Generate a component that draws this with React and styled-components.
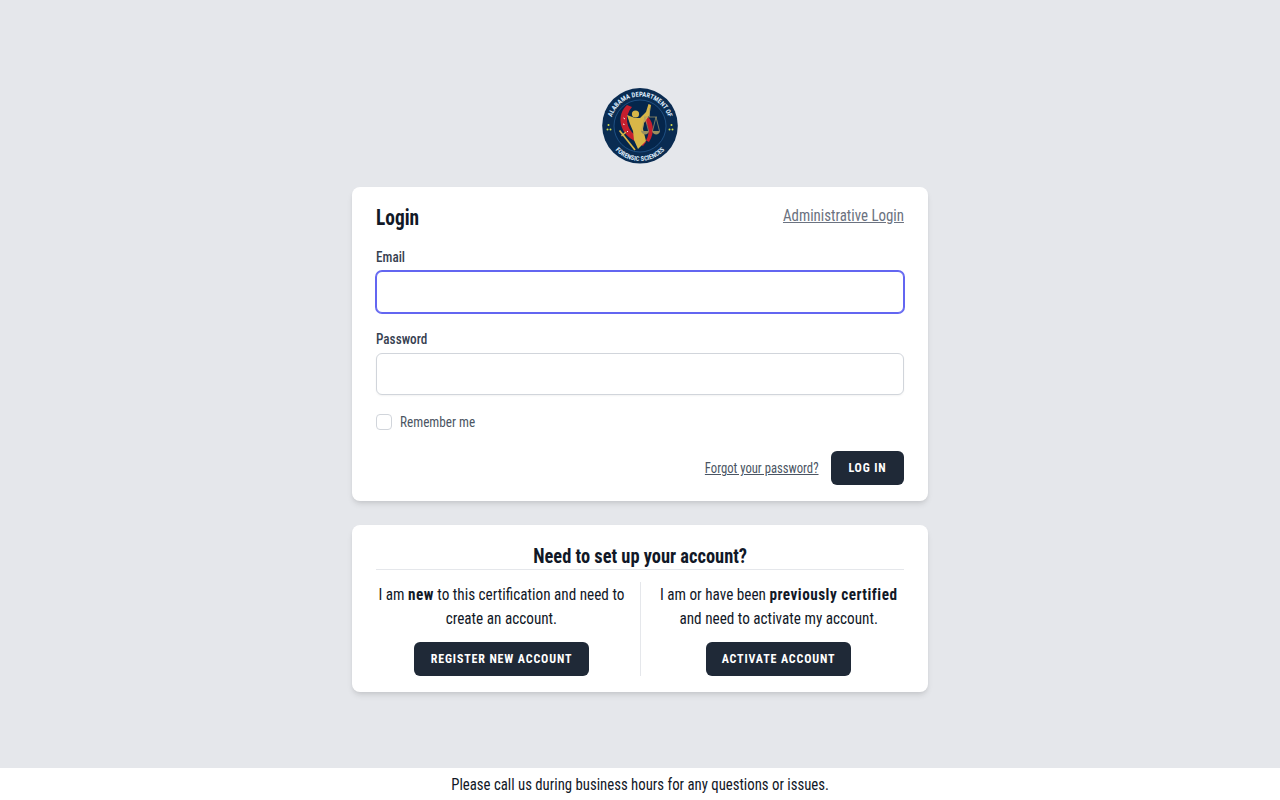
import React from "react";
import styled, { createGlobalStyle, css } from "styled-components";

const fontStack = `"Roboto Condensed", "Liberation Sans", sans-serif`;

// the condensed face is still wider than the design's, so squeeze the text runs
const squeeze = (x, origin = "left") => css`
  display: inline-block;
  white-space: nowrap;
  transform: scaleX(${x});
  transform-origin: ${origin} center;
`;

const GlobalStyle = createGlobalStyle`
  * { box-sizing: border-box; }
  body {
    margin: 0;
    background: #e5e7eb;
    font-family: ${fontStack};
    color: #111827;
  }
`;

const Page = styled.div`
  min-height: 800px;
  display: flex;
  flex-direction: column;
  align-items: center;
  padding-top: 88px;
`;

const LogoWrap = styled.div`
  width: 76px;
  height: 76px;
  margin-bottom: 23px;
`;

const Card = styled.section`
  width: 576px;
  background: #fff;
  border-radius: 8px;
  box-shadow: 0 4px 6px -1px rgba(0, 0, 0, 0.1), 0 2px 4px -1px rgba(0, 0, 0, 0.06);
  padding: 16px 24px;
  margin-bottom: 24px;
`;

const CardHead = styled.div`
  display: flex;
  justify-content: space-between;
  align-items: flex-start;
  height: 44px;
`;

const Title = styled.h2`
  ${squeeze(0.88)}
  margin: 0;
  font-size: 22px;
  line-height: 30px;
  font-weight: 700;
  color: #111827;
`;

const AdminLink = styled.a`
  ${squeeze(0.877, "right")}
  font-size: 17px;
  line-height: 24px;
  color: #6b7280;
  text-decoration: underline;
`;

const Label = styled.label`
  ${squeeze(0.88)}
  display: block;
  font-size: 15px;
  line-height: 20px;
  font-weight: 500;
  color: #374151;
  margin-bottom: 4px;
`;

const Input = styled.input`
  display: block;
  width: 100%;
  height: 42px;
  border: 1px solid #d1d5db;
  border-radius: 6px;
  background: #fff;
  outline: none;
  margin-bottom: 16px;
  box-shadow: 0 1px 2px rgba(0, 0, 0, 0.05);

  &:focus {
    border-color: #6366f1;
    box-shadow: 0 0 0 1px #6366f1;
  }
`;

const RememberRow = styled.label`
  display: flex;
  align-items: center;
  gap: 8px;
  height: 22px;
`;

const RememberText = styled.span`
  ${squeeze(0.88)}
  font-size: 15px;
  color: #4b5563;
`;

const CheckBox = styled.input`
  appearance: none;
  width: 16px;
  height: 16px;
  margin: 0;
  background: #fff;
  border: 1px solid #d1d5db;
  border-radius: 4px;
`;

const Actions = styled.div`
  display: flex;
  justify-content: flex-end;
  align-items: center;
  gap: 12px;
  margin-top: 18px;
`;

const ForgotLink = styled.a`
  ${squeeze(0.845, "right")}
  font-size: 15px;
  color: #4b5563;
  text-decoration: underline;
`;

const Button = styled.button`
  height: 34px;
  padding: 0 ${p => p.$pad || 17}px;
  border: none;
  border-radius: 6px;
  background: #1f2937;
  color: #fff;
  font-family: ${fontStack};
  font-size: 12px;
  font-weight: 700;
  letter-spacing: 0.85px;
  text-transform: uppercase;
`;

const SetupTitle = styled.h3`
  margin: 0 0 12px;
  height: 29px;
  border-bottom: 1px solid #e5e7eb;
  text-align: center;
  font-size: 20px;
  line-height: 30px;
  font-weight: 700;
  color: #111827;
`;

const SetupTitleText = styled.span`
  ${squeeze(0.92, "center")}
`;

const Columns = styled.div`
  display: grid;
  grid-template-columns: 264px 264px;
`;

const Column = styled.div`
  display: flex;
  flex-direction: column;
  align-items: center;
  gap: 12px;
  padding-right: ${p => (p.$left ? "13px" : "0")};
  padding-left: ${p => (p.$left ? "0" : "12px")};
  border-left: ${p => (p.$left ? "none" : "1px solid #e5e7eb")};
`;

const ColumnText = styled.p`
  ${squeeze(0.895, "center")}
  margin: 0;
  text-align: center;
  font-size: 17px;
  line-height: 24px;
  color: #111827;

  b {
    letter-spacing: 0.55px;
  }
`;

const Footer = styled.footer`
  margin-top: auto;
  width: 100%;
  height: 32px;
  background: #fff;
  text-align: center;
  font-size: 17px;
  line-height: 33px;
  color: #111827;
`;

const FooterText = styled.span`
  ${squeeze(0.87, "center")}
`;

const Logo = () => (
  <svg width="76" height="76" viewBox="0 0 76 76">
    <defs>
      <path id="sealTop" d="M8.5 38 A29.5 29.5 0 0 1 67.5 38" />
      <path id="sealBottom" d="M5 40 A33 33 0 0 0 71 40" />
    </defs>
    <circle cx="38" cy="37.8" r="37.8" fill="#0a2c52" />
    <circle cx="38" cy="38" r="26" fill="#05264c" stroke="#2f6aa5" strokeWidth="0.6" />
    <text fill="#dceafa" fontSize="6.6" fontWeight="700" fontFamily="Roboto Condensed, sans-serif">
      <textPath href="#sealTop" startOffset="50%" textAnchor="middle">ALABAMA DEPARTMENT OF</textPath>
    </text>
    <text fill="#dceafa" fontSize="6.6" fontWeight="700" fontFamily="Roboto Condensed, sans-serif">
      <textPath href="#sealBottom" startOffset="50%" textAnchor="middle">FORENSIC SCIENCES</textPath>
    </text>
    <path d="M25 17 C15 26 16 43 31 52 L41 58 L44 54 L33 47 C24 40 22 28 30 19 Z" fill="#c51f2e" />
    <path d="M43 26 C51 32 54 43 47 54 L44 52.5 C49 44 46 35 40.5 30 Z" fill="#c51f2e" />
    <path d="M25 27 L33 30 L38 30 L44 24 L46.5 16 L49 17 L47.5 27 L42 35 L41 41 L44 53 L36 61 L32 52 L31 43 L28 36 Z" fill="#d8b648" />
    <circle cx="33.5" cy="26" r="3.6" fill="#d8b648" />
    <path d="M17.5 42.5 L33 62" stroke="#d8b648" strokeWidth="1.7" />
    <path d="M19.5 48 L24 44" stroke="#d8b648" strokeWidth="1.4" />
    <path d="M42 29 H55 M47.5 20 V29 M43 29 L39.5 43 M43 29 L46.5 43 M54 29 L50.5 43 M54 29 L57.5 43" stroke="#a79c6b" strokeWidth="0.7" fill="none" />
    <path d="M39 43 H47 C46.5 47.5 40 47.5 39 43 Z M50 43 H58 C57.5 47.5 51 47.5 50 43 Z" fill="#9a8e5e" />
    <path d="M21.5 30 L23 31 M21 36 L22.5 36.5 M25 43 L26 44" stroke="#fff" strokeWidth="0.9" />
    <g fill="#d8e04a">
      <circle cx="6.5" cy="37" r="1" />
      <circle cx="5.5" cy="41.5" r="1" />
      <circle cx="8.5" cy="41.5" r="1" />
      <circle cx="69.5" cy="37" r="1" />
      <circle cx="67.5" cy="41.5" r="1" />
      <circle cx="70.5" cy="41.5" r="1" />
    </g>
  </svg>
);

const App = () => (
  <>
    <GlobalStyle />
    <Page>
      <LogoWrap>
        <Logo />
      </LogoWrap>
      <Card>
        <CardHead>
          <Title>Login</Title>
          <AdminLink href="#">Administrative Login</AdminLink>
        </CardHead>
        <Label htmlFor="email">Email</Label>
        <Input id="email" type="email" autoFocus />
        <Label htmlFor="password">Password</Label>
        <Input id="password" type="password" />
        <RememberRow>
          <CheckBox type="checkbox" />
          <RememberText>Remember me</RememberText>
        </RememberRow>
        <Actions>
          <ForgotLink href="#">Forgot your password?</ForgotLink>
          <Button $pad={17.5}>Log in</Button>
        </Actions>
      </Card>
      <Card>
        <SetupTitle>
          <SetupTitleText>Need to set up your account?</SetupTitleText>
        </SetupTitle>
        <Columns>
          <Column $left>
            <ColumnText>
              I am <b>new</b> to this certification and need to
              <br />
              create an account.
            </ColumnText>
            <Button>Register new account</Button>
          </Column>
          <Column>
            <ColumnText>
              I am or have been <b>previously certified</b>
              <br />
              and need to activate my account.
            </ColumnText>
            <Button $pad={15.5}>Activate account</Button>
          </Column>
        </Columns>
      </Card>
      <Footer>
        <FooterText>Please call us during business hours for any questions or issues.</FooterText>
      </Footer>
    </Page>
  </>
);

export default App;
